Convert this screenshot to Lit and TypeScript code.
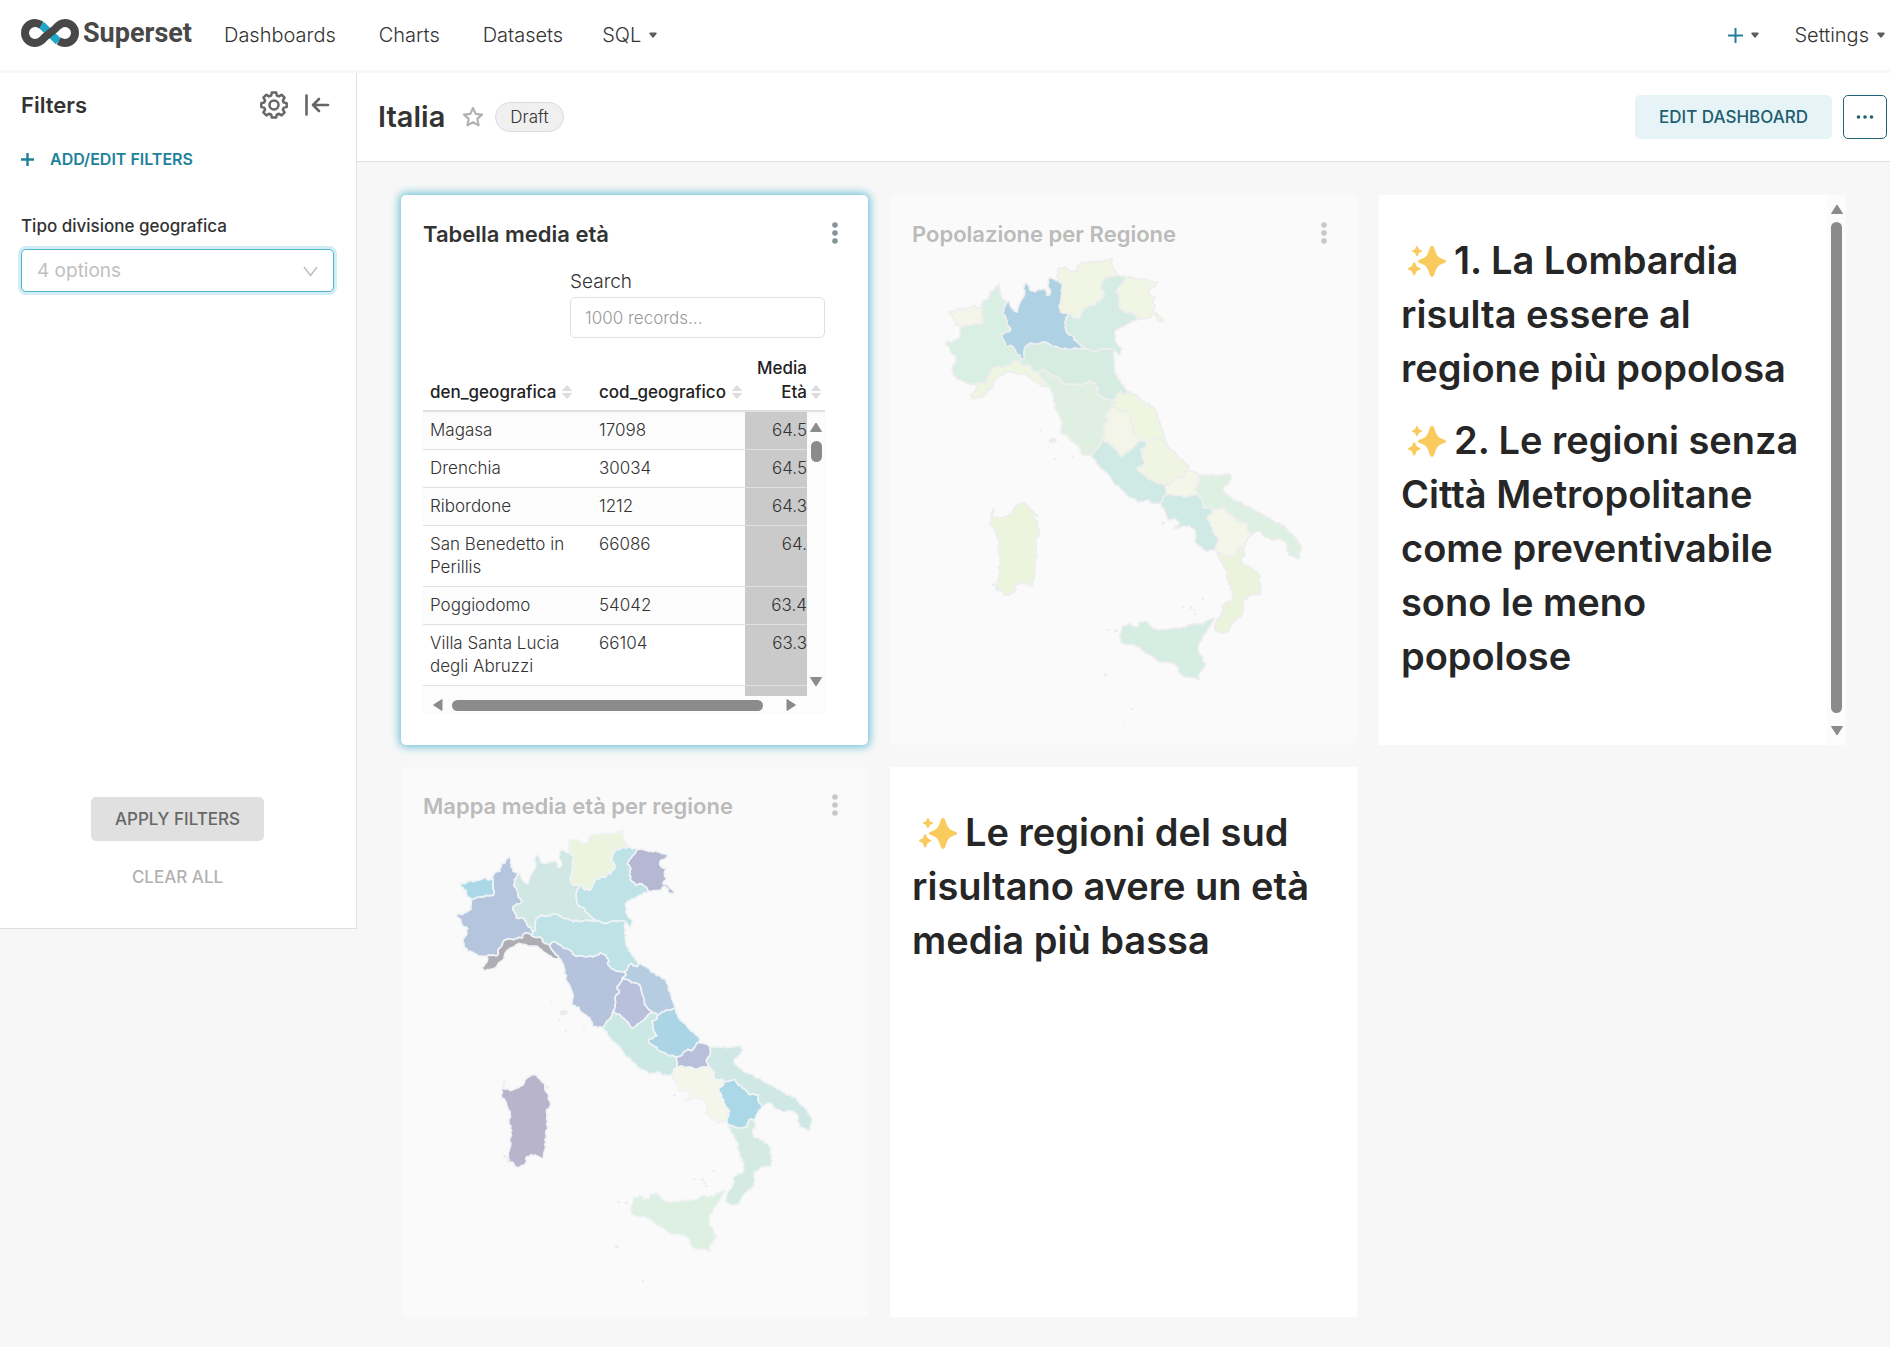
import { LitElement, html, svg, css } from "lit";
import { customElement, property } from "lit/decorators.js";

type Point = [number, number];

/** Shared borders and coastlines; every region is a chain of these. */
const ARCS: Record<string, string> = {
  aostaOut: "122,262 108,254 106,236 90,224 88,214 104,214 118,206 128,210 145,204 160,196 172,204 185,200",
  aostaPie: "122,262 136,256 150,254 164,250 188,248 190,238 186,222 185,200",
  pieNorth: "185,200 190,183 207,178 210,155 222,152 230,138 237,134 238,152 240,165 252,180 262,186",
  pieLom: "262,186 250,203 249,222 258,236 262,255 273,268 268,275 252,280 245,285 250,300 256,318 272,316 284,328 292,344 300,346 306,360",
  pieEmi: "306,360 302,372",
  pieLig: "302,372 292,364 276,368 274,378 264,376 248,384 236,380 218,386 214,398 202,412 200,430 180,430 166,432",
  pieWest: "166,432 142,432 130,424 110,418 98,402 96,384 104,372 110,350 94,340 90,324 76,314 80,305 94,308 108,300 120,292 122,262",
  lomNorth: "262,186 268,184 272,200 284,214 292,216 294,204 302,184 312,168 314,132 320,130 328,142 332,152 346,156 360,148 374,146 380,166 390,164 390,148 384,140 384,120 394,114 408,122 416,122",
  lomTre: "416,122 428,136 426,160 422,185 418,195 422,216 446,220",
  lomVen: "446,220 438,240 436,262 442,280 456,286 468,302 480,314 496,327",
  lomEmi: "496,327 470,324 456,328 436,324 426,330 410,320 392,316 376,306 352,312 330,310 318,318 312,338 314,354 306,360",
  treNorth: "416,122 412,104 416,84 438,82 450,94 470,92 478,72 496,66 530,64 546,66 560,58 576,54 578,60 572,66 580,82 588,98 598,106",
  treVen: "598,106 572,108 556,112 546,126 542,148 552,160 550,172 540,184 530,186 524,196 508,196 492,206 484,218 480,232 462,234 454,222 446,220",
  venNorth: "598,106 618,112",
  friVen: "618,112 610,126 600,138 588,156 600,170 594,188 602,208 614,220 632,216 646,226 652,238",
  friOut: "618,112 640,114 680,120 712,126 708,134 700,142 686,150 690,164 706,170 700,186 706,198 696,216 712,222 722,232 730,244 714,244 712,232 700,222 694,226 690,234 668,236 652,238",
  venCoast: "652,238 626,250 606,260 590,268 584,284 586,304 594,318 606,328 602,340 594,346 584,330",
  venEmi: "584,330 570,326 548,326 524,334 510,330 496,327",
  emiCoast: "584,330 582,350 582,376 588,404 602,426 622,454",
  emiMar: "622,454 618,464 606,462 602,454 594,460 590,468 580,480",
  emiTos: "580,480 564,478 548,472 532,460 530,440 524,430 508,422 492,432 470,434 448,432 430,430 424,420 408,410 392,402 374,390 362,392 356,400",
  emiLig: "356,400 334,388 330,378 312,376 302,372",
  ligTos: "356,400 362,412 372,424 384,438",
  ligCoast: "384,438 372,440 352,430 330,412 314,402 296,402 272,396 256,398 238,408 222,424 214,446 198,462 178,472 156,476 152,466 166,452 170,440 166,432",
  tosCoast: "384,438 396,456 402,476 406,506 418,526 426,556 424,580 444,586 450,600 470,614 484,632 486,645 514,647",
  tosLaz: "514,647 524,634 536,622 546,598",
  tosUmb: "546,598 552,586 552,556 564,544 560,522 568,512 574,498",
  tosMar: "580,480 586,488 574,498",
  umbMar: "574,498 588,502 602,512 620,514 630,528 634,548 640,570 650,588 664,600",
  umbLaz: "546,598 558,606 574,616 590,630 604,650 620,636 642,620 664,600",
  marLaz: "664,600 680,610",
  marAbr: "680,610 692,600 710,594 732,588",
  marCoast: "622,454 650,468 676,490 700,500 712,526 722,556 732,588",
  lazAbr: "680,610 678,622 662,628 666,650 678,672 652,684 654,692 678,706 684,716 706,726 736,736",
  abrCoast: "732,588 740,608 754,630 776,652 804,676 804,690",
  abrMol: "804,690 794,700 784,716 770,712 758,720 750,732 736,736",
  molCoast: "804,690 822,696 838,704",
  molPug: "838,704 838,730 826,748 834,762",
  molCam: "834,762 812,766 792,772 770,766 752,762 737,765",
  molLaz: "736,736 739,750 737,765",
  lazCam: "737,765 728,772 728,784 720,788",
  lazCoast: "514,647 528,660 540,684 562,700 580,726 600,744 624,768 644,776 654,788 680,780 698,790 720,788",
  pugCoast: "838,704 870,706 900,704 930,702 936,714 928,728 910,740 912,756 936,776 980,798 1020,818 1054,840 1096,858 1106,876 1130,896 1144,922 1134,958 1106,946 1100,926 1098,908 1084,898 1054,900 1030,888 1024,876 1008,874 994,884",
  pugBas: "994,884 984,872 982,848 954,848 942,832 924,820 912,802 892,808 876,808",
  camPug: "876,808 874,800 852,802 848,792 850,782 834,762",
  camBas: "876,808 878,816 862,836 872,850 878,872 896,898 888,926",
  camCoast: "720,788 732,806 740,826 744,838 766,836 780,848 762,866 784,860 808,856 822,868 830,890 824,906 844,920 862,934 876,930 888,926",
  basWest: "888,926 892,936",
  basCal: "892,936 922,948 948,944 954,924 972,922",
  basEast: "972,922 980,902 994,884",
  calCoast: "892,936 902,964 918,990 924,1020 938,1060 936,1080 906,1094 910,1110 900,1130 886,1150 886,1172 900,1178 926,1176 934,1154 950,1138 970,1122 970,1080 990,1066 1022,1062 1024,1046 1020,1028 1022,1008 1000,990 986,978 968,974 964,958 974,942 972,922",
  sicily: "600,1184 606,1162 626,1150 640,1162 654,1160 656,1148 676,1144 694,1160 716,1172 740,1168 776,1166 800,1160 820,1150 846,1154 866,1140 882,1134 872,1156 852,1184 836,1216 836,1240 848,1252 856,1276 840,1296 838,1318 808,1312 784,1304 768,1276 746,1266 722,1268 690,1246 662,1226 640,1214 616,1212 600,1202 600,1184",
  sardinia: "222,804 216,826 238,836 262,828 280,812 290,796 304,788 318,790 326,800 340,814 346,840 356,866 360,876 346,900 350,930 346,970 336,1038 318,1032 300,1028 288,1034 284,1054 266,1066 250,1062 244,1050 230,1050 232,1030 238,1006 236,980 242,956 234,930 238,900 226,872 210,850 212,834 222,804",
};

const REGIONS: Record<string, string> = {
  piemonte: "pieNorth pieLom pieEmi pieLig pieWest aostaPie",
  aosta: "aostaOut aostaPie",
  lombardia: "lomNorth lomTre lomVen lomEmi pieLom",
  trentino: "treNorth treVen lomTre",
  friuli: "friOut friVen",
  veneto: "venNorth friVen venCoast venEmi lomVen treVen",
  emilia: "emiCoast emiMar emiTos emiLig pieEmi lomEmi venEmi",
  liguria: "ligTos ligCoast pieLig emiLig",
  toscana: "tosCoast tosLaz tosUmb tosMar emiTos ligTos",
  umbria: "umbMar umbLaz tosUmb",
  marche: "marCoast marAbr marLaz umbMar tosMar emiMar",
  lazio: "umbLaz marLaz lazAbr molLaz lazCam lazCoast tosLaz",
  abruzzo: "abrCoast abrMol lazAbr marAbr",
  molise: "molCoast molPug molCam molLaz abrMol",
  campania: "camCoast camBas camPug molCam lazCam",
  puglia: "pugCoast pugBas camPug molPug",
  basilicata: "camBas basWest basCal basEast pugBas",
  calabria: "calCoast basCal",
  sicilia: "sicily",
  sardegna: "sardinia",
};

const ISLANDS: [number, number, number][] = [
  [362, 570, 3], [404, 601, 6], [396, 602, 8], [384, 625, 3], [404, 656, 3], [459, 652, 3],
  [730, 850, 4], [790, 1101, 3], [814, 1103, 4], [822, 1112, 3], [826, 1122, 3], [848, 1076, 3],
  [563, 1170, 3], [587, 1172, 4], [557, 1305, 5], [636, 1408, 3], [610, 1446, 3],
  [222, 1034, 5], [232, 1044, 5], [350, 826, 4],
];

/** Midpoint displacement that depends only on the segment, so neighbours agree. */
function roughen(points: Point[]): Point[] {
  const out: Point[] = [points[0]];
  for (let i = 1; i < points.length; i++) {
    const [ax, ay] = points[i - 1];
    const [bx, by] = points[i];
    const dx = bx - ax;
    const dy = by - ay;
    const length = Math.hypot(dx, dy) || 1;
    const steps = Math.max(1, Math.round(length / 7));
    for (let s = 1; s < steps; s++) {
      const seed = Math.sin(ax * 12.9898 + ay * 78.233 + s * 37.719) * 43758.5453;
      const shift = (seed - Math.floor(seed) - 0.5) * 6;
      out.push([ax + (dx * s) / steps - (dy / length) * shift, ay + (dy * s) / steps + (dx / length) * shift]);
    }
    out.push([bx, by]);
  }
  return out;
}

const LINES: Record<string, Point[]> = Object.fromEntries(
  Object.entries(ARCS).map(([name, text]) => [
    name,
    roughen(text.split(" ").map((pair) => pair.split(",").map(Number) as Point)),
  ]),
);

/** Joins the arcs end to end, turning each one so that it continues the chain. */
function outline(chain: string): string {
  const parts = chain.split(" ").map((n) => LINES[n]);
  const same = (a: Point, b: Point) => a[0] === b[0] && a[1] === b[1];
  const ring: Point[] = [...parts[0]];
  const rest = parts.slice(1);
  while (rest.length) {
    const end = ring[ring.length - 1];
    const i = rest.findIndex((p) => same(p[0], end) || same(p[p.length - 1], end));
    if (i < 0) break;
    const [next] = rest.splice(i, 1);
    ring.push(...(same(next[0], end) ? next : [...next].reverse()).slice(1));
  }
  return "M" + ring.map(([x, y]) => `${x.toFixed(1)} ${y.toFixed(1)}`).join("L") + "Z";
}

const OUTLINES = Object.entries(REGIONS).map(([name, chain]) => ({ name, d: outline(chain) }));

const POPULATION: Record<string, string> = {
  piemonte: "#d9efe3", aosta: "#f4f6ea", lombardia: "#aed1e4", trentino: "#f1f5e3", friuli: "#f1f5e4",
  veneto: "#d5ece4", emilia: "#d6ece3", liguria: "#eef5e0", toscana: "#dff0e2", umbria: "#f2f5e7",
  marche: "#eef5e0", lazio: "#cfe9e5", abruzzo: "#eff5e2", molise: "#f5f6ea", campania: "#cfe9e4",
  puglia: "#def0e1", basilicata: "#f3f6e9", calabria: "#ebf3dd", sicilia: "#d5ede3", sardegna: "#edf4de",
};

const MEAN_AGE: Record<string, string> = {
  piemonte: "#b5c5de", aosta: "#abd8e6", lombardia: "#d0e7e3", trentino: "#ecf3df", friuli: "#b6b8d3",
  veneto: "#bee2e6", emilia: "#bee2e6", liguria: "#adadb3", toscana: "#b6c3dc", umbria: "#b8c0db",
  marche: "#b5cce1", lazio: "#cce8e5", abruzzo: "#abd4e4", molise: "#b7bfda", campania: "#f4f6ea",
  puglia: "#cfe8e5", basilicata: "#abd8e7", calabria: "#d4eae3", sicilia: "#ddf0e1", sardegna: "#b7b4cb",
};

const ROWS: [string, string, string][] = [
  ["Magasa", "17098", "64.5"],
  ["Drenchia", "30034", "64.5"],
  ["Ribordone", "1212", "64.3"],
  ["San Benedetto in Perillis", "66086", "64."],
  ["Poggiodomo", "54042", "63.4"],
  ["Villa Santa Lucia degli Abruzzi", "66104", "63.3"],
  ["", "", ""],
];

const triangle = (d: string) => html`<svg class="arrow" width="12" height="12" viewBox="0 0 12 12" aria-hidden="true">
  <path d=${d} fill="#8b8b8b" stroke="#8b8b8b" stroke-width="1" stroke-linejoin="round" />
</svg>`;
const UP = "M6 2L11.5 10.5H0.5Z";
const DOWN = "M6 10L11.5 1.5H0.5Z";
const LEFT = "M1.5 6L10 0.5V11.5Z";
const RIGHT = "M10.5 6L2 0.5V11.5Z";

const caret = html`<svg class="caret" width="8" height="6" viewBox="0 0 8 6" aria-hidden="true">
  <path d="M1 0.5h6a.8.8 0 0 1 .6 1.3L4.6 5.4a.8.8 0 0 1-1.2 0L.4 1.8A.8.8 0 0 1 1 .5z" fill="#5c5c5c" />
</svg>`;

const sorter = html`<svg class="sorter" width="10" height="14" viewBox="0 0 10 14" aria-hidden="true">
  <path d="M5 .5L9.5 5.5H.5ZM5 13.5L.5 8.5H9.5Z" fill="#dcdcdc" stroke="#dcdcdc" stroke-linejoin="round" />
</svg>`;

const sparkles = html`<svg class="sparkles" width="38" height="31" viewBox="0 0 38 31" role="img" aria-label="✨">
  <g fill="#f8cb5c">
    <path d="M24 0c1 0 1.700.6 2.100 1.700 2.700 8.300 3.500 9.700 10.400 12 1 .4 1.500.9 1.500 1.600s-.5 1.200-1.500 1.600c-6.900 2.300-7.700 3.700-10.400 12-.4 1.200-1.100 1.800-2.100 1.800s-1.700-.6-2.100-1.800c-2.700-8.300-3.500-9.700-10.400-12-1-.4-1.500-.9-1.500-1.600s.5-1.200 1.500-1.600c6.900-2.300 7.700-3.700 10.400-12C22.300.6 23 0 24 0z" />
    <path d="M9 0c.5 0 .7.3.9.8.9 2.600 1 2.700 3.400 3.500.4.200.7.400.7.800s-.3.600-.7.800c-2.400.8-2.500.9-3.400 3.500-.2.500-.4.800-.9.800s-.7-.3-.9-.8C7.200 6.800 7.100 6.700 4.700 5.900 4.300 5.700 4 5.500 4 5.100s.3-.6.700-.8C7.100 3.500 7.200 3.400 8.100.8 8.300.3 8.500 0 9 0z" />
    <path d="M6.200 16.200c.6 0 .9.400 1.100.9 1.200 3.400 1.200 3.500 4.400 4.600.5.200.8.500.8 1s-.3.800-.8 1c-3.200 1.100-3.200 1.300-4.400 4.700-.2.600-.5 1-1.100 1s-.9-.4-1.100-1C3.900 25 3.900 24.800.8 23.700c-.5-.2-.8-.5-.8-1s.3-.8.8-1c3.100-1.100 3.100-1.200 4.300-4.600.2-.5.5-.9 1.100-.9z" />
  </g>
</svg>`;

@customElement("italy-map")
class ItalyMap extends LitElement {
  @property({ attribute: false }) colors: Record<string, string> = {};
  @property() label = "";
  @property() line = "#eeeeee";

  static styles = css`
    :host { display: block; }
    .map { display: block; width: 100%; height: auto; }
  `;

  render() {
    return html`<svg class="map" viewBox="-24 42 1269 1404" role="img" aria-label=${this.label}>
      <g stroke=${this.line} stroke-width="5" stroke-linejoin="round">
        ${OUTLINES.map((r) => svg`<path d=${r.d} fill=${this.colors[r.name]} />`)}
      </g>
      <g fill="#e9eded">${ISLANDS.map(([x, y, r]) => svg`<ellipse cx=${x} cy=${y} rx=${r + 1} ry=${r} />`)}</g>
    </svg>`;
  }
}

@customElement("app-root")
class AppRoot extends LitElement {
  static styles = css`
    :host {
      display: flex;
      flex-direction: column;
      min-height: 100vh;
      background: #f7f7f7;
      color: #333;
      font-family: Inter, "Liberation Sans", sans-serif;
      font-size: 19px;
      font-weight: 300;
      line-height: 24px;
    }
    * { box-sizing: border-box; }
    svg { flex: none; }
    a { color: inherit; text-decoration: none; }
    button, input, select { font: inherit; color: inherit; margin: 0; }
    button { border: 0; background: none; padding: 0; cursor: pointer; }

    .navbar { display: flex; align-items: center; height: 73px; padding: 0 5px 0 21px; background: #fff; border-bottom: 3px solid #f7f7f7; font-size: 20px; }
    .brand { display: flex; align-items: center; gap: 4px; margin-right: 32px; padding-bottom: 4px; color: #484848; font: 700 27px/28px Roboto, sans-serif; }
    .links { display: flex; gap: 43px; }
    .menu { display: flex; align-items: center; gap: 8px; }
    .links .menu { margin-left: -4px; }
    .tools { display: flex; align-items: center; gap: 35px; margin-left: auto; }

    .layout { display: flex; align-items: flex-start; flex: 1; }
    .sidebar { flex: none; width: 357px; background: #fff; border: solid #e0e0e0; border-width: 0 1px 1px 0; padding: 16px 22px 29px 21px; display: flex; flex-direction: column; }
    .side-head { display: flex; align-items: center; height: 32px; }
    .side-title { flex: 1; margin: 0; font-size: 22px; font-weight: 600; }
    .icon { display: flex; color: #666; }
    .gear { margin-right: 17px; }
    .collapse { margin-right: 4px; }
    .add { display: flex; align-items: center; gap: 16px; margin-top: 26px; color: #20819b; font-size: 16px; font-weight: 600; }
    .filter-label { margin-top: 43px; font-size: 17px; font-weight: 500; }
    .picker { position: relative; margin-top: 11px; }
    .select { display: block; appearance: none; width: 100%; height: 43px; padding: 1px 15px 0; border: 1px solid #4fb3cb; border-radius: 5px; box-shadow: 0 0 0 3px #d2edf4; background: #fff; color: #bfbfbf; font-weight: 400; }
    .chevron { position: absolute; right: 16px; top: 17px; pointer-events: none; }
    .actions { display: flex; flex-direction: column; align-items: center; gap: 14px; margin-top: 505px; }
    .btn { height: 44px; padding: 0 24px; border-radius: 5px; font-size: 17px; font-weight: 500; }
    .apply { background: #e0e0e0; color: #666; }
    .clear { color: #b2b2b2; }

    .main { flex: 1; min-width: 0; }
    .header { display: flex; align-items: center; height: 89px; padding: 0 3px 0 21px; background: #fff; border-bottom: 1px solid #e0e0e0; }
    .title { margin: 0 17px 0 0; font-size: 29px; line-height: 36px; font-weight: 600; }
    .pill { margin-left: 11px; padding: 2px 14px; border: 1px solid #dcdcdc; border-radius: 15px; background: #f0f0f0; font-size: 17px; }
    .edit { margin-left: auto; background: #e6f4f8; color: #1f5d70; }
    .more { width: 44px; height: 44px; margin-left: 11px; display: grid; place-items: center; border: 1px solid #1f6378; border-radius: 5px; color: #1f5d70; }

    .grid { display: grid; grid-template-columns: repeat(3, minmax(0, 1fr)); grid-auto-rows: minmax(550px, auto); gap: 22px; padding: 33px 44px 30px; }
    .card { background: #fff; padding: 22px; }
    .faded { background: #fafafa; color: #bbb; border-radius: 5px; }
    .active { border-radius: 5px; box-shadow: 0 0 9px 2px #6dc1d6; }
    .card-head { display: flex; justify-content: space-between; align-items: flex-start; height: 37px; }
    .card-title { margin: 0; font-size: 22px; line-height: 34px; font-weight: 600; }
    .kebab { display: flex; margin: 4px 8px 0 0; color: #879399; }
    .faded .kebab { color: #c8c8c8; }

    .chart { padding: 16px 21px 0 0; }
    .search { display: flex; flex-direction: column; gap: 3px; width: 255px; margin-left: auto; }
    .search-box { width: 100%; height: 41px; padding: 0 14px; border: 1px solid #e0e0e0; border-radius: 5px; font-size: 17px; background: #fff; }
    .search-box::placeholder { color: #999; opacity: 1; }
    .frame { position: relative; margin-top: 18px; }
    .clip { height: 340px; overflow: hidden; }
    table { width: 100%; border-collapse: separate; border-spacing: 0; table-layout: fixed; font-size: 17px; line-height: 23px; }
    .c1 { width: 169px; }
    .c2 { width: 153px; }
    .c4 { width: 18px; }
    th { padding: 0 0 6px 7px; border-bottom: 2px solid #e0e0e0; color: #222; font-weight: 500; line-height: 24px; text-align: left; vertical-align: bottom; }
    td { height: 38px; padding: 7px 20px 7px 7px; border-bottom: 1px solid #e0e0e0; vertical-align: top; }
    tbody tr:nth-child(odd) td { background: #fcfcfc; }
    .th { display: flex; align-items: center; gap: 6px; }
    .th.right { justify-content: flex-end; align-items: flex-end; gap: 4px; padding-right: 4px; text-align: right; }
    .th.right .sorter { margin-bottom: 5px; }
    tbody tr td.num { padding: 7px 0; background: #cacaca; text-align: right; }
    tbody tr td.gap { padding: 0; border-bottom: 0; background: #fcfcfc; }
    .vbar { position: absolute; right: 0; top: 56px; bottom: 18px; width: 18px; display: flex; flex-direction: column; align-items: center; padding: 9px 0 8px; background: #fcfcfc; }
    .hbar { display: flex; align-items: center; height: 18px; padding: 0 28px 0 9px; background: #fcfcfc; }
    .thumb { border-radius: 6px; background: #8b8b8b; }
    .vbar .thumb { width: 11px; height: 21px; margin: 8px 0 auto; }
    .hbar .thumb { flex: 1; height: 11px; margin: 0 22px 0 8px; }

    .note { display: flex; padding: 0; }
    .text { flex: 1; padding: 38px 22px 22px; color: #262626; }
    .heading { margin: 0 0 18px; font-size: 38px; line-height: 54px; font-weight: 600; }
    .sparkles { margin: 0 8px 0 7px; vertical-align: -3px; }
    .rail { width: 19px; display: flex; flex-direction: column; align-items: center; padding: 8px 0; background: #fcfcfc; }
    .rail .thumb { flex: 1; width: 11px; margin: 7px 0 12px; }
  `;

  private kebab(name: string) {
    return html`<button class="kebab" aria-label=${`Options for ${name}`}>
      <svg width="6" height="24" viewBox="0 0 6 24" fill="currentColor" aria-hidden="true">
        <circle cx="3" cy="4" r="2.800" /><circle cx="3" cy="12" r="2.800" /><circle cx="3" cy="20" r="2.800" />
      </svg>
    </button>`;
  }

  private cardHead(name: string) {
    return html`<div class="card-head"><h2 class="card-title">${name}</h2>${this.kebab(name)}</div>`;
  }

  private mapCard(name: string, colors: Record<string, string>, line: string) {
    return html`<section class="card faded">
      ${this.cardHead(name)}
      <italy-map .colors=${colors} .label=${name} .line=${line}></italy-map>
    </section>`;
  }

  render() {
    return html`
      <header class="navbar">
        <a class="brand" href="#">
          <svg width="58" height="28" viewBox="0 0 58 28" fill="none" stroke-width="8" aria-hidden="true">
            <path d="M20 5.500L37.500 22.500" stroke="#20a7c9" />
            <path d="M20.200 6C17.900 4.600 16 4 14 4a10 10 0 0 0 0 20c4.500 0 7.500-3 10-6l10-8c2.500-3 5.500-6 10-6a10 10 0 0 1 0 20c-2 0-3.900-.6-6.200-2" stroke="#484848" />
          </svg>
          <span>Superset</span>
        </a>
        <nav class="links">
          <a href="#">Dashboards</a>
          <a href="#">Charts</a>
          <a href="#">Datasets</a>
          <button class="menu">SQL ${caret}</button>
        </nav>
        <div class="tools">
          <button class="menu" aria-label="New">
            <svg width="15" height="15" viewBox="0 0 15 15" aria-hidden="true"><path d="M7.500 0v15M0 7.500h15" stroke="#20819b" stroke-width="2" /></svg>
            ${caret}
          </button>
          <button class="menu">Settings ${caret}</button>
        </div>
      </header>

      <div class="layout">
        <aside class="sidebar">
          <div class="side-head">
            <h2 class="side-title">Filters</h2>
            <button class="icon gear" aria-label="Filter settings">
              <svg width="28" height="28" viewBox="0 0 28 28" fill="none" stroke="currentColor" stroke-width="2.500" stroke-linejoin="round" aria-hidden="true">
                <path d="M11.800 1.500h4.400l.6 3 2.200.9 2.600-1.700 3 3-1.700 2.700.9 2.100 2.900.6v3.900l-2.900.6-.9 2.200 1.700 2.600-3 3-2.600-1.700-2.200.9-.6 2.900h-4.400l-.6-2.900-2.200-.9-2.600 1.700-3-3 1.700-2.600-.9-2.200-2.900-.6v-3.900l2.900-.6.9-2.100-1.700-2.700 3-3L9 5.400l2.200-.9z" />
                <circle cx="14" cy="14" r="4.500" />
              </svg>
            </button>
            <button class="icon collapse" aria-label="Collapse filters">
              <svg width="25" height="22" viewBox="0 0 25 22" fill="none" stroke="currentColor" stroke-width="2.600" stroke-linecap="round" stroke-linejoin="round" aria-hidden="true">
                <path d="M1.500 1.500v19M23 11H8M14 5l-6 6 6 6" />
              </svg>
            </button>
          </div>
          <button class="add">
            <svg width="13" height="13" viewBox="0 0 13 13" aria-hidden="true"><path d="M6.500 0v13M0 6.500h13" stroke="currentColor" stroke-width="2.400" /></svg>
            ADD/EDIT FILTERS
          </button>
          <label class="filter-label" for="division">Tipo divisione geografica</label>
          <div class="picker">
            <select class="select" id="division"><option>4 options</option></select>
            <svg class="chevron" width="15" height="11" viewBox="0 0 15 11" fill="none" aria-hidden="true"><path d="M1 1l6.500 8.500L14 1" stroke="#bfbfbf" stroke-width="1.500" /></svg>
          </div>
          <div class="actions">
            <button class="btn apply">APPLY FILTERS</button>
            <button class="btn clear">CLEAR ALL</button>
          </div>
        </aside>

        <main class="main">
          <div class="header">
            <h1 class="title">Italia</h1>
            <button class="icon" aria-label="Favourite">
              <svg width="22" height="22" viewBox="0 0 22 22" fill="none" stroke="#b2b2b2" stroke-width="2.200" stroke-linejoin="round" aria-hidden="true">
                <path d="M11 2l2.700 5.900 6.300.7-4.700 4.300 1.300 6.500L11 16.200l-5.600 3.200 1.300-6.500L2 8.600l6.300-.7z" />
              </svg>
            </button>
            <span class="pill">Draft</span>
            <button class="btn edit">EDIT DASHBOARD</button>
            <button class="more" aria-label="More actions">
              <svg width="18" height="4" viewBox="0 0 18 4" fill="currentColor" aria-hidden="true"><circle cx="2.500" cy="2" r="1.800" /><circle cx="9" cy="2" r="1.800" /><circle cx="15.500" cy="2" r="1.800" /></svg>
            </button>
          </div>

          <div class="grid">
            <section class="card active">
              ${this.cardHead("Tabella media età")}
              <div class="chart">
                <div class="search">
                  <label for="search">Search</label>
                  <input class="search-box" id="search" type="text" placeholder="1000 records..." />
                </div>
                <div class="frame">
                  <div class="clip">
                    <table>
                      <colgroup><col class="c1" /><col class="c2" /><col /><col class="c4" /></colgroup>
                      <thead>
                        <tr>
                          <th scope="col"><span class="th">den_geografica ${sorter}</span></th>
                          <th scope="col"><span class="th">cod_geografico ${sorter}</span></th>
                          <th scope="col" colspan="2"><span class="th right"><span>Media<br />Età</span>${sorter}</span></th>
                        </tr>
                      </thead>
                      <tbody>
                        ${ROWS.map(
                          ([name, code, age]) => html`<tr>
                            <td>${name}</td>
                            <td>${code}</td>
                            <td class="num">${age}</td>
                            <td class="gap"></td>
                          </tr>`,
                        )}
                      </tbody>
                    </table>
                  </div>
                  <div class="vbar">${triangle(UP)}<div class="thumb"></div>${triangle(DOWN)}</div>
                  <div class="hbar">${triangle(LEFT)}<div class="thumb"></div>${triangle(RIGHT)}</div>
                </div>
              </div>
            </section>

            ${this.mapCard("Popolazione per Regione", POPULATION, "#eeeeee")}

            <section class="card note">
              <div class="text">
                <h2 class="heading">${sparkles}1. La Lombardia risulta essere al regione più popolosa</h2>
                <h2 class="heading">${sparkles}2. Le regioni senza Città Metropolitane come preventivabile sono le meno popolose</h2>
              </div>
              <div class="rail">${triangle(UP)}<div class="thumb"></div>${triangle(DOWN)}</div>
            </section>

            ${this.mapCard("Mappa media età per regione", MEAN_AGE, "#f0f3f5")}

            <section class="card note">
              <div class="text">
                <h2 class="heading">${sparkles}Le regioni del sud risultano avere un età media più bassa</h2>
              </div>
            </section>
          </div>
        </main>
      </div>
    `;
  }
}
